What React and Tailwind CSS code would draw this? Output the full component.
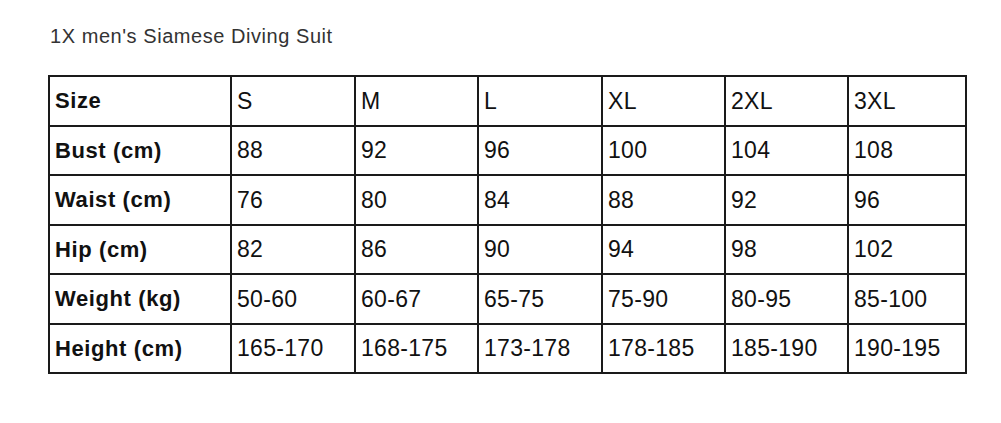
const sizes = ['S', 'M', 'L', 'XL', '2XL', '3XL'];

const rows = [
  { label: 'Bust (cm)', values: ['88', '92', '96', '100', '104', '108'] },
  { label: 'Waist (cm)', values: ['76', '80', '84', '88', '92', '96'] },
  { label: 'Hip (cm)', values: ['82', '86', '90', '94', '98', '102'] },
  { label: 'Weight (kg)', values: ['50-60', '60-67', '65-75', '75-90', '80-95', '85-100'] },
  { label: 'Height (cm)', values: ['165-170', '168-175', '173-178', '178-185', '185-190', '190-195'] },
];

const cell = 'border-2 border-[#1a1a1a] h-[49.5px] px-[5px] text-left align-middle';

export default function App() {
  return (
    <div className="w-[1001px] h-[423px] bg-white font-['Liberation_Sans',Arial,sans-serif] text-[#111]">
      <div className="pl-[50px] pt-[25px] text-[20px] leading-[22px] tracking-[0.55px] text-[#333]">
        1X men's Siamese Diving Suit
      </div>

      <table className="ml-[48px] mt-[28px] w-[917px] border-collapse table-fixed">
        <colgroup>
          <col className="w-[182px]" />
          <col className="w-[124px]" />
          <col className="w-[123px]" />
          <col className="w-[124px]" />
          <col className="w-[123px]" />
          <col className="w-[123px]" />
          <col className="w-[118px]" />
        </colgroup>
        <tbody>
          <tr>
            <th className={`${cell} font-bold text-[22px] tracking-[0.6px]`}>Size</th>
            {sizes.map((s) => (
              <td key={s} className={`${cell} text-[23px] tracking-[0.3px]`}>{s}</td>
            ))}
          </tr>
          {rows.map((r) => (
            <tr key={r.label}>
              <th className={`${cell} font-bold text-[22px] tracking-[0.6px]`}>{r.label}</th>
              {r.values.map((v, i) => (
                <td key={i} className={`${cell} text-[23px] tracking-[0.3px]`}>{v}</td>
              ))}
            </tr>
          ))}
        </tbody>
      </table>
    </div>
  );
}
